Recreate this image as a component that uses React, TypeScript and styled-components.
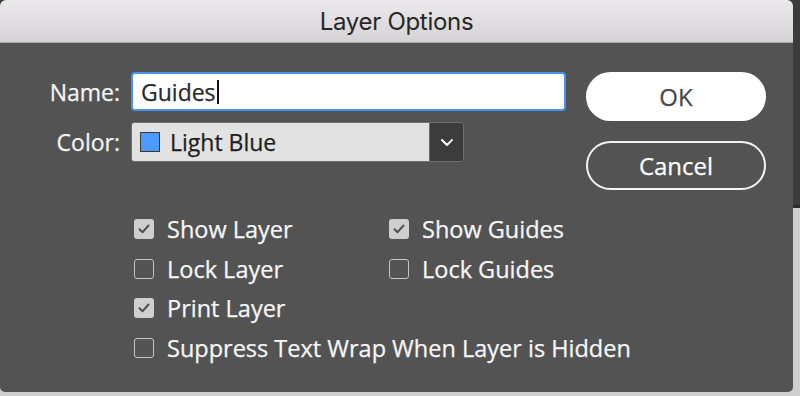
import styled, { createGlobalStyle } from "styled-components";

const GlobalStyle = createGlobalStyle`
  html, body {
    margin: 0;
    padding: 0;
  }
  body {
    width: 800px;
    height: 396px;
    overflow: hidden;
    background: linear-gradient(180deg, #3b3b3b 0 205px, #2a2a2a 205px 208px, #cfcfcf 208px);
    font-family: "Open Sans", "Liberation Sans", sans-serif;
  }
`;

const Dialog = styled.div`
  width: 793px;
  height: 392px;
  background: #535353;
  border-radius: 6px 6px 5px 5px;
  overflow: hidden;
  display: flex;
  flex-direction: column;
  -webkit-text-stroke: 0.25px currentColor;
`;

// 타이틀 바
const TitleBar = styled.div`
  height: 42px;
  flex-shrink: 0;
  display: flex;
  align-items: center;
  justify-content: center;
  background: linear-gradient(180deg, #ebe9eb 0%, #d5d3d5 100%);
  border-bottom: 1px solid #a9a9a9;
  font-family: Inter, "Liberation Sans", sans-serif;
  font-size: 24px;
  color: #262626;
  letter-spacing: -0.3px;
  -webkit-text-stroke: 0;
`;

const Body = styled.div`
  display: flex;
  flex-direction: column;
  padding: 29px 27px 0 0;
`;

const TopRow = styled.div`
  display: flex;
  justify-content: space-between;
  align-items: flex-start;
`;

const FormGrid = styled.div`
  display: grid;
  grid-template-columns: 120px 435px;
  column-gap: 11px;
  row-gap: 11px;
  align-items: center;
`;

const Label = styled.label`
  text-align: right;
  color: #f4f4f4;
  font-size: 23px;
`;

const NameInput = styled.div`
  height: 35px;
  box-sizing: content-box;
  border: 2px solid #4a93ec;
  border-radius: 4px;
  background: #fff;
  display: flex;
  align-items: center;
  padding-left: 8px;
  font-size: 23px;
  color: #2a2a2a;
`;

const Caret = styled.span`
  width: 2px;
  height: 24px;
  background: #111;
  margin-left: 1px;
`;

const Select = styled.div`
  width: 331px;
  height: 38px;
  display: flex;
  border: 1px solid #6e6e6e;
  border-radius: 3px;
  overflow: hidden;
`;

const SelectValue = styled.div`
  flex: 1;
  display: flex;
  align-items: center;
  gap: 10px;
  padding-left: 8px;
  background: #e2e2e2;
  color: #1e1e1e;
  font-size: 23px;
`;

const Swatch = styled.span<{ $color: string }>`
  width: 18px;
  height: 18px;
  background: ${(p) => p.$color};
  border: 1px solid #3a3a3a;
`;

const SelectArrow = styled.div`
  width: 33px;
  display: flex;
  align-items: center;
  justify-content: center;
  background: #3c3c3c;
  border-left: 1px solid #6e6e6e;
`;

const Buttons = styled.div`
  display: flex;
  flex-direction: column;
  gap: 20px;
  width: 180px;
`;

const PillButton = styled.button<{ $primary?: boolean }>`
  height: 49px;
  border-radius: 25px;
  font-family: "Open Sans", "Liberation Sans", sans-serif;
  font-size: 24px;
  cursor: pointer;
  -webkit-text-stroke: 0.25px currentColor;
  background: ${(p) => (p.$primary ? "#ffffff" : "transparent")};
  color: ${(p) => (p.$primary ? "#4a4a4a" : "#ffffff")};
  border: ${(p) => (p.$primary ? "none" : "2px solid #f2f2f2")};
`;

const Checks = styled.div`
  display: grid;
  grid-template-columns: 255px auto;
  grid-auto-rows: 39.7px;
  margin: 19px 0 0 134px;
`;

const CheckRow = styled.div<{ $span?: boolean }>`
  display: flex;
  align-items: center;
  gap: 13px;
  grid-column: ${(p) => (p.$span ? "1 / span 2" : "auto")};
  color: #f6f6f6;
  font-size: 23.5px;
  white-space: nowrap;
`;

const Box = styled.span<{ $checked?: boolean }>`
  width: 20px;
  height: 20px;
  flex-shrink: 0;
  box-sizing: border-box;
  border-radius: 3px;
  display: flex;
  align-items: center;
  justify-content: center;
  background: ${(p) => (p.$checked ? "#cfcfcf" : "transparent")};
  border: ${(p) => (p.$checked ? "none" : "1.5px solid #c4c4c4")};
`;

function Check({ checked }: { checked?: boolean }) {
  return (
    <Box $checked={checked}>
      {checked && (
        <svg width="12" height="10" viewBox="0 0 12 10">
          <path
            d="M1.5 5.2L4.6 8.2L10.5 1.5"
            stroke="#4e4e4e"
            strokeWidth="2"
            fill="none"
            strokeLinecap="round"
            strokeLinejoin="round"
          />
        </svg>
      )}
    </Box>
  );
}

const options = [
  { label: "Show Layer", checked: true },
  { label: "Show Guides", checked: true },
  { label: "Lock Layer", checked: false },
  { label: "Lock Guides", checked: false },
  { label: "Print Layer", checked: true, span: true },
  { label: "Suppress Text Wrap When Layer is Hidden", checked: false, span: true },
];

export default function App() {
  return (
    <>
      <GlobalStyle />
      <Dialog>
        <TitleBar>Layer Options</TitleBar>
        <Body>
          <TopRow>
            <FormGrid>
              <Label>Name:</Label>
              <NameInput>
                Guides
                <Caret />
              </NameInput>
              <Label>Color:</Label>
              <Select>
                <SelectValue>
                  <Swatch $color="#4e9bff" />
                  Light Blue
                </SelectValue>
                <SelectArrow>
                  <svg width="14" height="9" viewBox="0 0 14 9">
                    <path
                      d="M2 2L7 7L12 2"
                      stroke="#fff"
                      strokeWidth="2"
                      fill="none"
                      strokeLinecap="round"
                      strokeLinejoin="round"
                    />
                  </svg>
                </SelectArrow>
              </Select>
            </FormGrid>
            <Buttons>
              <PillButton $primary>OK</PillButton>
              <PillButton>Cancel</PillButton>
            </Buttons>
          </TopRow>
          <Checks>
            {options.map((o) => (
              <CheckRow key={o.label} $span={o.span}>
                <Check checked={o.checked} />
                {o.label}
              </CheckRow>
            ))}
          </Checks>
        </Body>
      </Dialog>
    </>
  );
}
